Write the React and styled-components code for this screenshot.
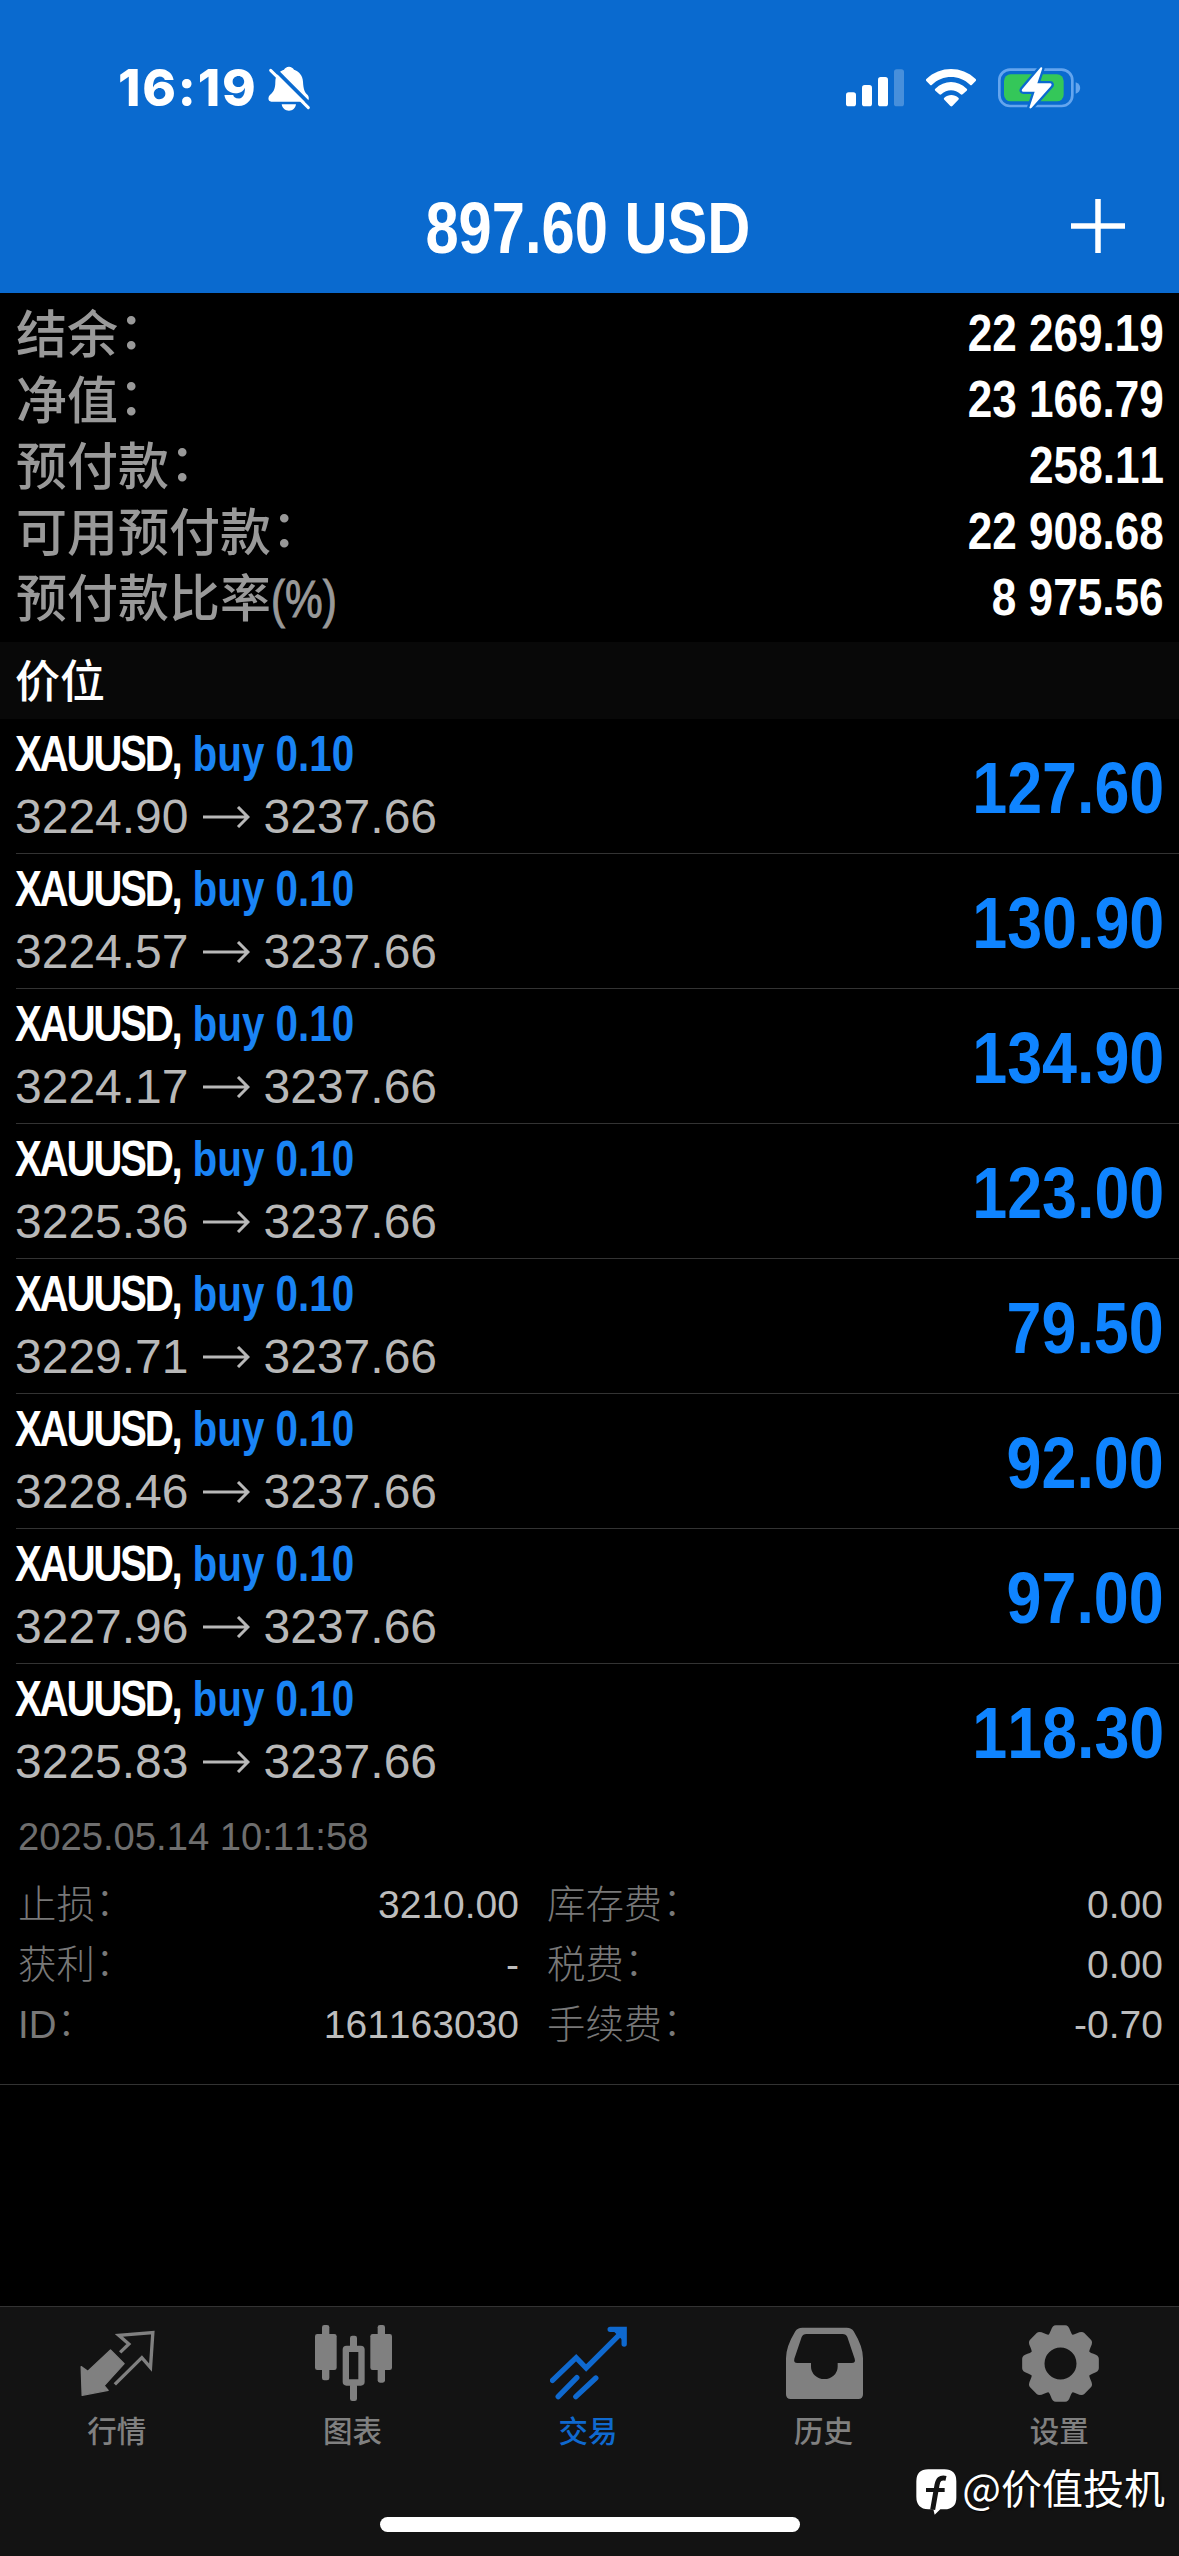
import React from 'react';
import styled, { createGlobalStyle } from 'styled-components';

const latin = `'Liberation Sans', 'Noto Sans CJK SC', sans-serif`;
const cjk = `'Noto Sans CJK SC', 'Liberation Sans', sans-serif`;

const GlobalStyle = createGlobalStyle`
  * {
    box-sizing: border-box;
  }

  body {
    margin: 0;
    background: #000;
    font-family: ${latin};
    font-kerning: none;
  }
`

const Screen = styled.div`
  position: relative;
  display: flex;
  flex-direction: column;
  width: 1179px;
  height: 2556px;
  overflow: hidden;
  background: #000;
`

/* Text squeezed horizontally to get a condensed face */
const Condensed = styled.span`
  display: inline-block;
  font-weight: ${props => props.$weight || 700};
  white-space: nowrap;
  transform: scaleX(${props => props.$ratio});
  transform-origin: ${props => props.$origin || 'right'} center;
`

/* Full-width colon, lifted to the middle of the line */
const Colon = styled.span`
  margin-left: 0.01em;
  line-height: 0;
  vertical-align: 0.08em;
`

const Header = styled.header`
  height: 293px;
  background: #0a6acf;
  color: #fff;
`

const StatusBar = styled.div`
  display: flex;
  align-items: center;
  height: 160px;
  padding: 16px 98px 0 118px;
`

const Time = styled.span`
  width: 150px;
  font-family: Inter, sans-serif;
  font-size: 51px;
  font-weight: 800;
  line-height: 60px;
  letter-spacing: 1.8px;
  font-kerning: auto;
  white-space: nowrap;
`

const StatusIcons = styled.div`
  display: flex;
  align-items: center;
  gap: 22px;
  margin-left: auto;
`

const TitleBar = styled.div`
  display: grid;
  grid-template-columns: 1fr auto 1fr;
  align-items: center;
  height: 133px;
  padding: 2px 54px 0 51px;
`

const Title = styled(Condensed)`
  grid-column: 2;
  font-size: 73px;
  line-height: 80px;
`

const AddButton = styled.button`
  justify-self: end;
  display: flex;
  margin-bottom: 4px;
  padding: 0;
  border: 0;
  background: none;
  color: inherit;
`

const Summary = styled.dl`
  margin: 0;
  padding: 8px 15px 11px 16px;
`

const SummaryRow = styled.div`
  display: flex;
  justify-content: space-between;
  height: 66px;
  line-height: 66px;
`

const SummaryLabel = styled.dt`
  font-size: 51px;
  font-weight: 500;
  line-height: 70px;
  color: #999;
`

const Unit = styled(Condensed)`
  line-height: 66px;
  -webkit-text-stroke: 1px currentColor;
`

const SummaryValue = styled.dd`
  margin: 0;
  font-size: 51px;
  color: #fff;
`

const SectionTitle = styled.h2`
  height: 77px;
  margin: 0;
  padding-left: 15px;
  background: #080808;
  color: #fff;
  font-size: 45px;
  font-weight: 500;
  line-height: 81px;
`

const Position = styled.div`
  display: flex;
  justify-content: space-between;
  align-items: center;
  height: 135px;
  margin-left: 16px;
  padding-right: 15px;
  border-bottom: 1px solid ${props => (props.$open ? 'transparent' : '#333')};
`

const PositionInfo = styled.div`
  display: flex;
  flex-direction: column;
  gap: 3px;
  margin: 0 0 2px -1px;
  line-height: 60px;
`

const Symbol = styled(Condensed)`
  font-size: 50px;
  color: #fff;
`

const Name = styled.span`
  letter-spacing: -2.9px;
`

const Side = styled.span`
  margin-left: 4px;
  color: #1a84f5;
`

const Prices = styled.div`
  display: flex;
  align-items: center;
  gap: 14px;
  font-size: 48px;
  color: #b8b8b8;
`

const Profit = styled(Condensed)`
  padding-top: 4px;
  font-size: 73px;
  line-height: 80px;
  color: #0f84ff;
`

const Details = styled.div`
  padding: 15px 16px 29px 18px;
  border-bottom: 1px solid #333;
`

const OpenTime = styled.div`
  margin-bottom: 15px;
  font-size: 38.2px;
  line-height: 46px;
  color: #6e6e6e;
`

const DetailGrid = styled.div`
  display: grid;
  grid-template-columns: 501px 1fr;
  column-gap: 28px;
  font-size: 39px;
  line-height: 60px;
`

const Detail = styled.div`
  display: flex;
  justify-content: space-between;
  height: 60px;
  color: #bdbdbd;
`

const DetailLabel = styled.span`
  font-size: 38.4px;
  font-weight: 300;
  color: #787878;
`

const TabBar = styled.nav`
  display: flex;
  flex-direction: column;
  align-items: center;
  height: 250px;
  margin-top: auto;
  border-top: 1px solid #333;
  background: #131313;
`

const Tabs = styled.div`
  display: grid;
  grid-template-columns: repeat(5, 1fr);
  width: 100%;
  padding-right: 1px;
`

const Tab = styled.a`
  display: flex;
  flex-direction: column;
  align-items: center;
  padding-top: 18px;
  color: ${props => (props.$active ? '#0f69cf' : '#808080')};
`

const TabLabel = styled.span`
  margin-top: 10px;
  padding-right: 2px;
  font-size: 29.5px;
  font-weight: 500;
  line-height: 40px;
`

const HomeIndicator = styled.div`
  width: 420px;
  height: 15px;
  margin: auto 0 24px;
  border-radius: 8px;
  background: #fff;
`

const Watermark = styled.div`
  position: absolute;
  right: 14px;
  bottom: 40px;
  display: flex;
  align-items: center;
  gap: 4px;
  font-family: ${cjk};
  font-size: 41px;
  font-weight: 400;
  line-height: 60px;
  color: #fff;
  text-shadow: 1px 1px 2px #000;
`

const LogoMark = styled.svg`
  margin-top: 12px;
`

const BellOff = () => (
  <svg width="43" height="45" viewBox="564 76 129 135">
    <path
      fill="currentColor"
      d="M627 78c7 0 12 4 15 9 16 5 26 18 27 36 1 22 5 32 14 40 5 5 5 20-4 20H574c-10 0-11-12-5-19 9-9 17-15 17-41 0-18 10-31 26-36 3-5 8-9 15-9zM605 191h43c-2 12-10 19-21 19s-20-7-22-19z"
    />
    <path d="M579 80L696 197" stroke="#0a6acf" strokeWidth="11" />
    <path d="M572 89L685 201" stroke="currentColor" strokeWidth="9" strokeLinecap="round" />
  </svg>
)

const Signal = () => (
  <svg width="58" height="38" viewBox="78 86 174 114" fill="currentColor">
    <rect x="78" y="156" width="30" height="42" rx="8" />
    <rect x="126" y="134" width="30" height="64" rx="8" />
    <rect x="174" y="110" width="30" height="88" rx="8" />
    <rect x="222" y="87" width="30" height="111" rx="8" opacity="0.25" />
  </svg>
)

const Wifi = () => (
  <svg width="50" height="38" viewBox="318 86 150 114" fill="currentColor">
    <path d="M319 116c42-40 106-40 148 0 2 2 2 4 0 6l-11 11c-2 2-4 2-6 0-32-31-82-31-114 0-2 2-4 2-6 0l-11-11c-2-2-2-4 0-6z" />
    <path d="M346 145c27-27 67-27 94 0 2 2 2 4 0 6l-12 11c-2 2-4 2-6 0-17-16-41-16-58 0-2 2-4 2-6 0l-12-11c-2-2-2-4 0-6z" />
    <path d="M373 172c12-11 30-11 42 0 2 2 2 4 0 6l-18 19c-2 2-4 2-6 0l-18-19c-2-2-2-4 0-6z" />
  </svg>
)

const Battery = () => (
  <svg width="83" height="44" viewBox="537 77 249 132">
    <rect x="541" y="88" width="219" height="109" rx="32" fill="none" stroke="#64a5ee" strokeWidth="8" />
    <path d="M770 126c18 5 18 28 0 34z" fill="#64a5ee" />
    <rect x="555" y="102" width="179" height="81" rx="20" fill="#34c759" />
    <path
      d="M664 82c5-3 7 0 5 5l-14 42h38c5 0 6 4 3 8l-58 65c-4 4-8 2-6-3l15-45h-34c-5 0-6-4-3-8z"
      fill="#fff"
      stroke="#0a6acf"
      strokeWidth="14"
      strokeLinejoin="round"
      paintOrder="stroke"
    />
  </svg>
)

const Plus = () => (
  <svg width="54" height="54" viewBox="0 0 54 54" stroke="currentColor" strokeWidth="5.5">
    <path d="M27 0V54M0 27H54" />
  </svg>
)

const Arrow = () => (
  <svg width="47" height="22" viewBox="0 0 47 22" fill="none" stroke="currentColor" strokeWidth="3">
    <path d="M0 11H45M35 1L45 11L35 21" />
  </svg>
)

const QuotesIcon = () => (
  <svg width="77" height="77" viewBox="235.5 105 231 231">
    <path
      d="M242 230L262 244L330 180L371 221L311 287L323 301L245 316Z"
      fill="currentColor"
      stroke="currentColor"
      strokeWidth="4"
      strokeLinejoin="round"
    />
    <path d="M359 187L385 162L355 136L457 128L450 233L424 203L343 283" fill="none" stroke="currentColor" strokeWidth="10" />
  </svg>
)

const ChartIcon = () => (
  <svg width="77" height="77" viewBox="945 105 231 231" fill="currentColor">
    <rect x="966" y="105" width="22" height="166" rx="7" />
    <rect x="945" y="132" width="65" height="108" rx="7" />
    <rect x="1050" y="137" width="21" height="40" rx="7" />
    <rect x="1050" y="280" width="21" height="53" rx="7" />
    <rect x="1037.5" y="176.5" width="47" height="101" rx="2" fill="none" stroke="currentColor" strokeWidth="19" strokeLinejoin="round" />
    <rect x="1133" y="105" width="22" height="173" rx="7" />
    <rect x="1111" y="132" width="65" height="108" rx="7" />
  </svg>
)

const TradeIcon = () => (
  <svg width="77" height="77" viewBox="211.5 105 231 231" fill="none" stroke="currentColor" strokeWidth="16" strokeLinecap="round">
    <path d="M219 271L290 203L320 234L426 128" />
    <path d="M236 320L292 263M289 320L349 264" />
    <path d="M392 118H434V162" />
    <path d="M405 122H430V147Z" fill="currentColor" strokeWidth="6" />
  </svg>
)

const HistoryIcon = () => (
  <svg width="77" height="77" viewBox="918 105 231 231" fill="currentColor" fillRule="evenodd">
    <path d="M967 113H1100Q1115 113 1121 124Q1149 170 1149 205V313Q1149 327 1135 327H932Q918 327 918 313V205Q918 170 946 124Q952 113 967 113ZM979 132Q969 132 965 141L943 206Q940 219 952 219H993V230A40 37 0 0 0 1073 230V219H1115Q1128 219 1124 206L1102 141Q1098 132 1088 132Z" />
  </svg>
)

const SettingsIcon = () => (
  <svg width="77" height="77" viewBox="-115.5 -115.5 231 231" fill="currentColor">
    <circle r="70" fill="none" stroke="currentColor" strokeWidth="44" />
    {[0, 45, 90, 135, 180, 225, 270, 315].map(angle => (
      <path
        key={angle}
        transform={`rotate(${angle})`}
        d="M-40 -80Q-32 -90 -29 -99Q-24 -115 -14 -115H14Q24 -115 29 -99Q32 -90 40 -80Z"
      />
    ))}
  </svg>
)

const Logo = () => (
  <LogoMark width="42" height="47" viewBox="346 542 126 141">
    <path
      d="M383 543H431Q467 543 467 579V628Q467 662 431 663H419L402 679L398 663H383Q347 661 347 625V579Q347 543 383 543Z"
      fill="#fff"
    />
    <path d="M436 570C418 566 412 574 409 590L396 664" fill="none" stroke="#131313" strokeWidth="15" />
    <path d="M376 605H432" stroke="#131313" strokeWidth="12" />
  </LogoMark>
)

const summary = [
  { label: '结余', value: '22 269.19' },
  { label: '净值', value: '23 166.79' },
  { label: '预付款', value: '258.11' },
  { label: '可用预付款', value: '22 908.68' },
  { label: '预付款比率', unit: '(%)', value: '8 975.56' },
];

const positions = [
  { open: '3224.90', profit: '127.60' },
  { open: '3224.57', profit: '130.90' },
  { open: '3224.17', profit: '134.90' },
  { open: '3225.36', profit: '123.00' },
  { open: '3229.71', profit: '79.50' },
  { open: '3228.46', profit: '92.00' },
  { open: '3227.96', profit: '97.00' },
  { open: '3225.83', profit: '118.30', expanded: true },
];

const details = [
  ['止损', '3210.00'],
  ['库存费', '0.00'],
  ['获利', '-'],
  ['税费', '0.00'],
  ['ID', '161163030'],
  ['手续费', '-0.70'],
];

const tabs = [
  { label: '行情', Icon: QuotesIcon },
  { label: '图表', Icon: ChartIcon },
  { label: '交易', Icon: TradeIcon, active: true },
  { label: '历史', Icon: HistoryIcon },
  { label: '设置', Icon: SettingsIcon },
];

const PositionRow = (props) => {
  const { open, profit, expanded } = props;

  return (
    <Position $open={expanded}>
      <PositionInfo>
        <Symbol $ratio={0.808} $origin="left">
          <Name>XAUUSD, </Name>
          <Side>buy 0.10</Side>
        </Symbol>
        <Prices>
          <span>{open}</span>
          <Arrow />
          <span>3237.66</span>
        </Prices>
      </PositionInfo>
      <Profit $ratio={0.86}>{profit}</Profit>
    </Position>
  )
}

const App = () => (
  <>
    <GlobalStyle />
    <Screen>
      <Header>
        <StatusBar>
          <Time>16:19</Time>
          <BellOff />
          <StatusIcons>
            <Signal />
            <Wifi />
            <Battery />
          </StatusIcons>
        </StatusBar>
        <TitleBar>
          <Title $ratio={0.817} $origin="center">897.60 USD</Title>
          <AddButton>
            <Plus />
          </AddButton>
        </TitleBar>
      </Header>
      <Summary>
        {summary.map(({ label, unit, value }) => (
          <SummaryRow key={label}>
            <SummaryLabel>
              {label}
              {unit
                ? <Unit $ratio={0.83} $origin="left" $weight={400}>{unit}</Unit>
                : <Colon>：</Colon>}
            </SummaryLabel>
            <SummaryValue>
              <Condensed $ratio={0.865}>{value}</Condensed>
            </SummaryValue>
          </SummaryRow>
        ))}
      </Summary>
      <SectionTitle>价位</SectionTitle>
      {positions.map(position => (
        <PositionRow key={position.open} {...position} />
      ))}
      <Details>
        <OpenTime>2025.05.14 10:11:58</OpenTime>
        <DetailGrid>
          {details.map(([label, value]) => (
            <Detail key={label}>
              <DetailLabel>
                {label}
                <Colon>：</Colon>
              </DetailLabel>
              <span>{value}</span>
            </Detail>
          ))}
        </DetailGrid>
      </Details>
      <TabBar>
        <Tabs>
          {tabs.map(({ label, Icon, active }) => (
            <Tab key={label} $active={active}>
              <Icon />
              <TabLabel>{label}</TabLabel>
            </Tab>
          ))}
        </Tabs>
        <HomeIndicator />
      </TabBar>
      <Watermark>
        <Logo />
        @价值投机
      </Watermark>
    </Screen>
  </>
)

export default App;
